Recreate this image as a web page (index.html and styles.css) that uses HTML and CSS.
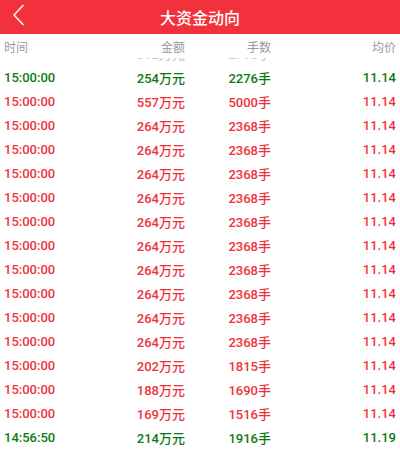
FILE: index.html
```html
<!DOCTYPE html>
<html lang="zh">
<head>
    <meta charset="UTF-8">
    <meta name="viewport" content="width=device-width, initial-scale=1.0">
    <title>大资金动向</title>
    <link rel="stylesheet" href="styles.css">
</head>
<body>
    <div class="topbar">
        <span class="back">
            <svg width="14" height="22" viewBox="0 0 14 22"><polyline points="11.5,1 2,11 11.5,21" fill="none" stroke="#fff" stroke-width="1.4"/></svg>
        </span>
        <h1>大资金动向</h1>
    </div>

    <div class="thead">
        <span>时间</span>
        <span>金额</span>
        <span>手数</span>
        <span>均价</span>
    </div>

    <div class="list">
        <div class="rows">
            <div class="row green faded"><span>15:00:00</span><span>312万元</span><span>2796手</span><span>11.14</span></div>
            <div class="row green"><span>15:00:00</span><span>254万元</span><span>2276手</span><span>11.14</span></div>
            <div class="row red"><span>15:00:00</span><span>557万元</span><span>5000手</span><span>11.14</span></div>
            <div class="row red"><span>15:00:00</span><span>264万元</span><span>2368手</span><span>11.14</span></div>
            <div class="row red"><span>15:00:00</span><span>264万元</span><span>2368手</span><span>11.14</span></div>
            <div class="row red"><span>15:00:00</span><span>264万元</span><span>2368手</span><span>11.14</span></div>
            <div class="row red"><span>15:00:00</span><span>264万元</span><span>2368手</span><span>11.14</span></div>
            <div class="row red"><span>15:00:00</span><span>264万元</span><span>2368手</span><span>11.14</span></div>
            <div class="row red"><span>15:00:00</span><span>264万元</span><span>2368手</span><span>11.14</span></div>
            <div class="row red"><span>15:00:00</span><span>264万元</span><span>2368手</span><span>11.14</span></div>
            <div class="row red"><span>15:00:00</span><span>264万元</span><span>2368手</span><span>11.14</span></div>
            <div class="row red"><span>15:00:00</span><span>264万元</span><span>2368手</span><span>11.14</span></div>
            <div class="row red"><span>15:00:00</span><span>264万元</span><span>2368手</span><span>11.14</span></div>
            <div class="row red"><span>15:00:00</span><span>202万元</span><span>1815手</span><span>11.14</span></div>
            <div class="row red"><span>15:00:00</span><span>188万元</span><span>1690手</span><span>11.14</span></div>
            <div class="row red"><span>15:00:00</span><span>169万元</span><span>1516手</span><span>11.14</span></div>
            <div class="row green"><span>14:56:50</span><span>214万元</span><span>1916手</span><span>11.19</span></div>
        </div>
    </div>
</body>
</html>
```

FILE: styles.css
```css
body {
    margin: 0;
    font-family: Roboto, "Noto Sans CJK SC", sans-serif;
    background: #fff;
    width: 400px;
    height: 452px;
    overflow: hidden;
}
.topbar {
    height: 34px;
    background: #f2313c;
    display: flex;
    align-items: center;
    justify-content: center;
    position: relative;
}
.topbar h1 {
    margin: 0;
    color: #fff;
    font-size: 16px;
    font-weight: 500;
}
.back {
    position: absolute;
    left: 12px;
    top: 4px;
    display: flex;
}
.thead,
.row {
    display: grid;
    grid-template-columns: 4px 1fr 80px 86px 125px 4px;
}
.thead span:first-child,
.row span:first-child {
    grid-column: 2;
}
.thead span,
.row span {
    text-align: right;
}
.thead span:first-child,
.row span:first-child {
    text-align: left;
}
.thead {
    height: 24px;
    align-items: center;
    font-size: 12px;
    color: #999;
}
.list {
    height: 394px;
    overflow: hidden;
}
.rows {
    margin-top: -17px;
}
.row {
    height: 24px;
    align-items: center;
    font-size: 13px;
    font-weight: 500;
}
.red {
    color: #f0313c;
}
.green {
    color: #0c7a12;
}
.faded {
    opacity: 0.3;
}
```
